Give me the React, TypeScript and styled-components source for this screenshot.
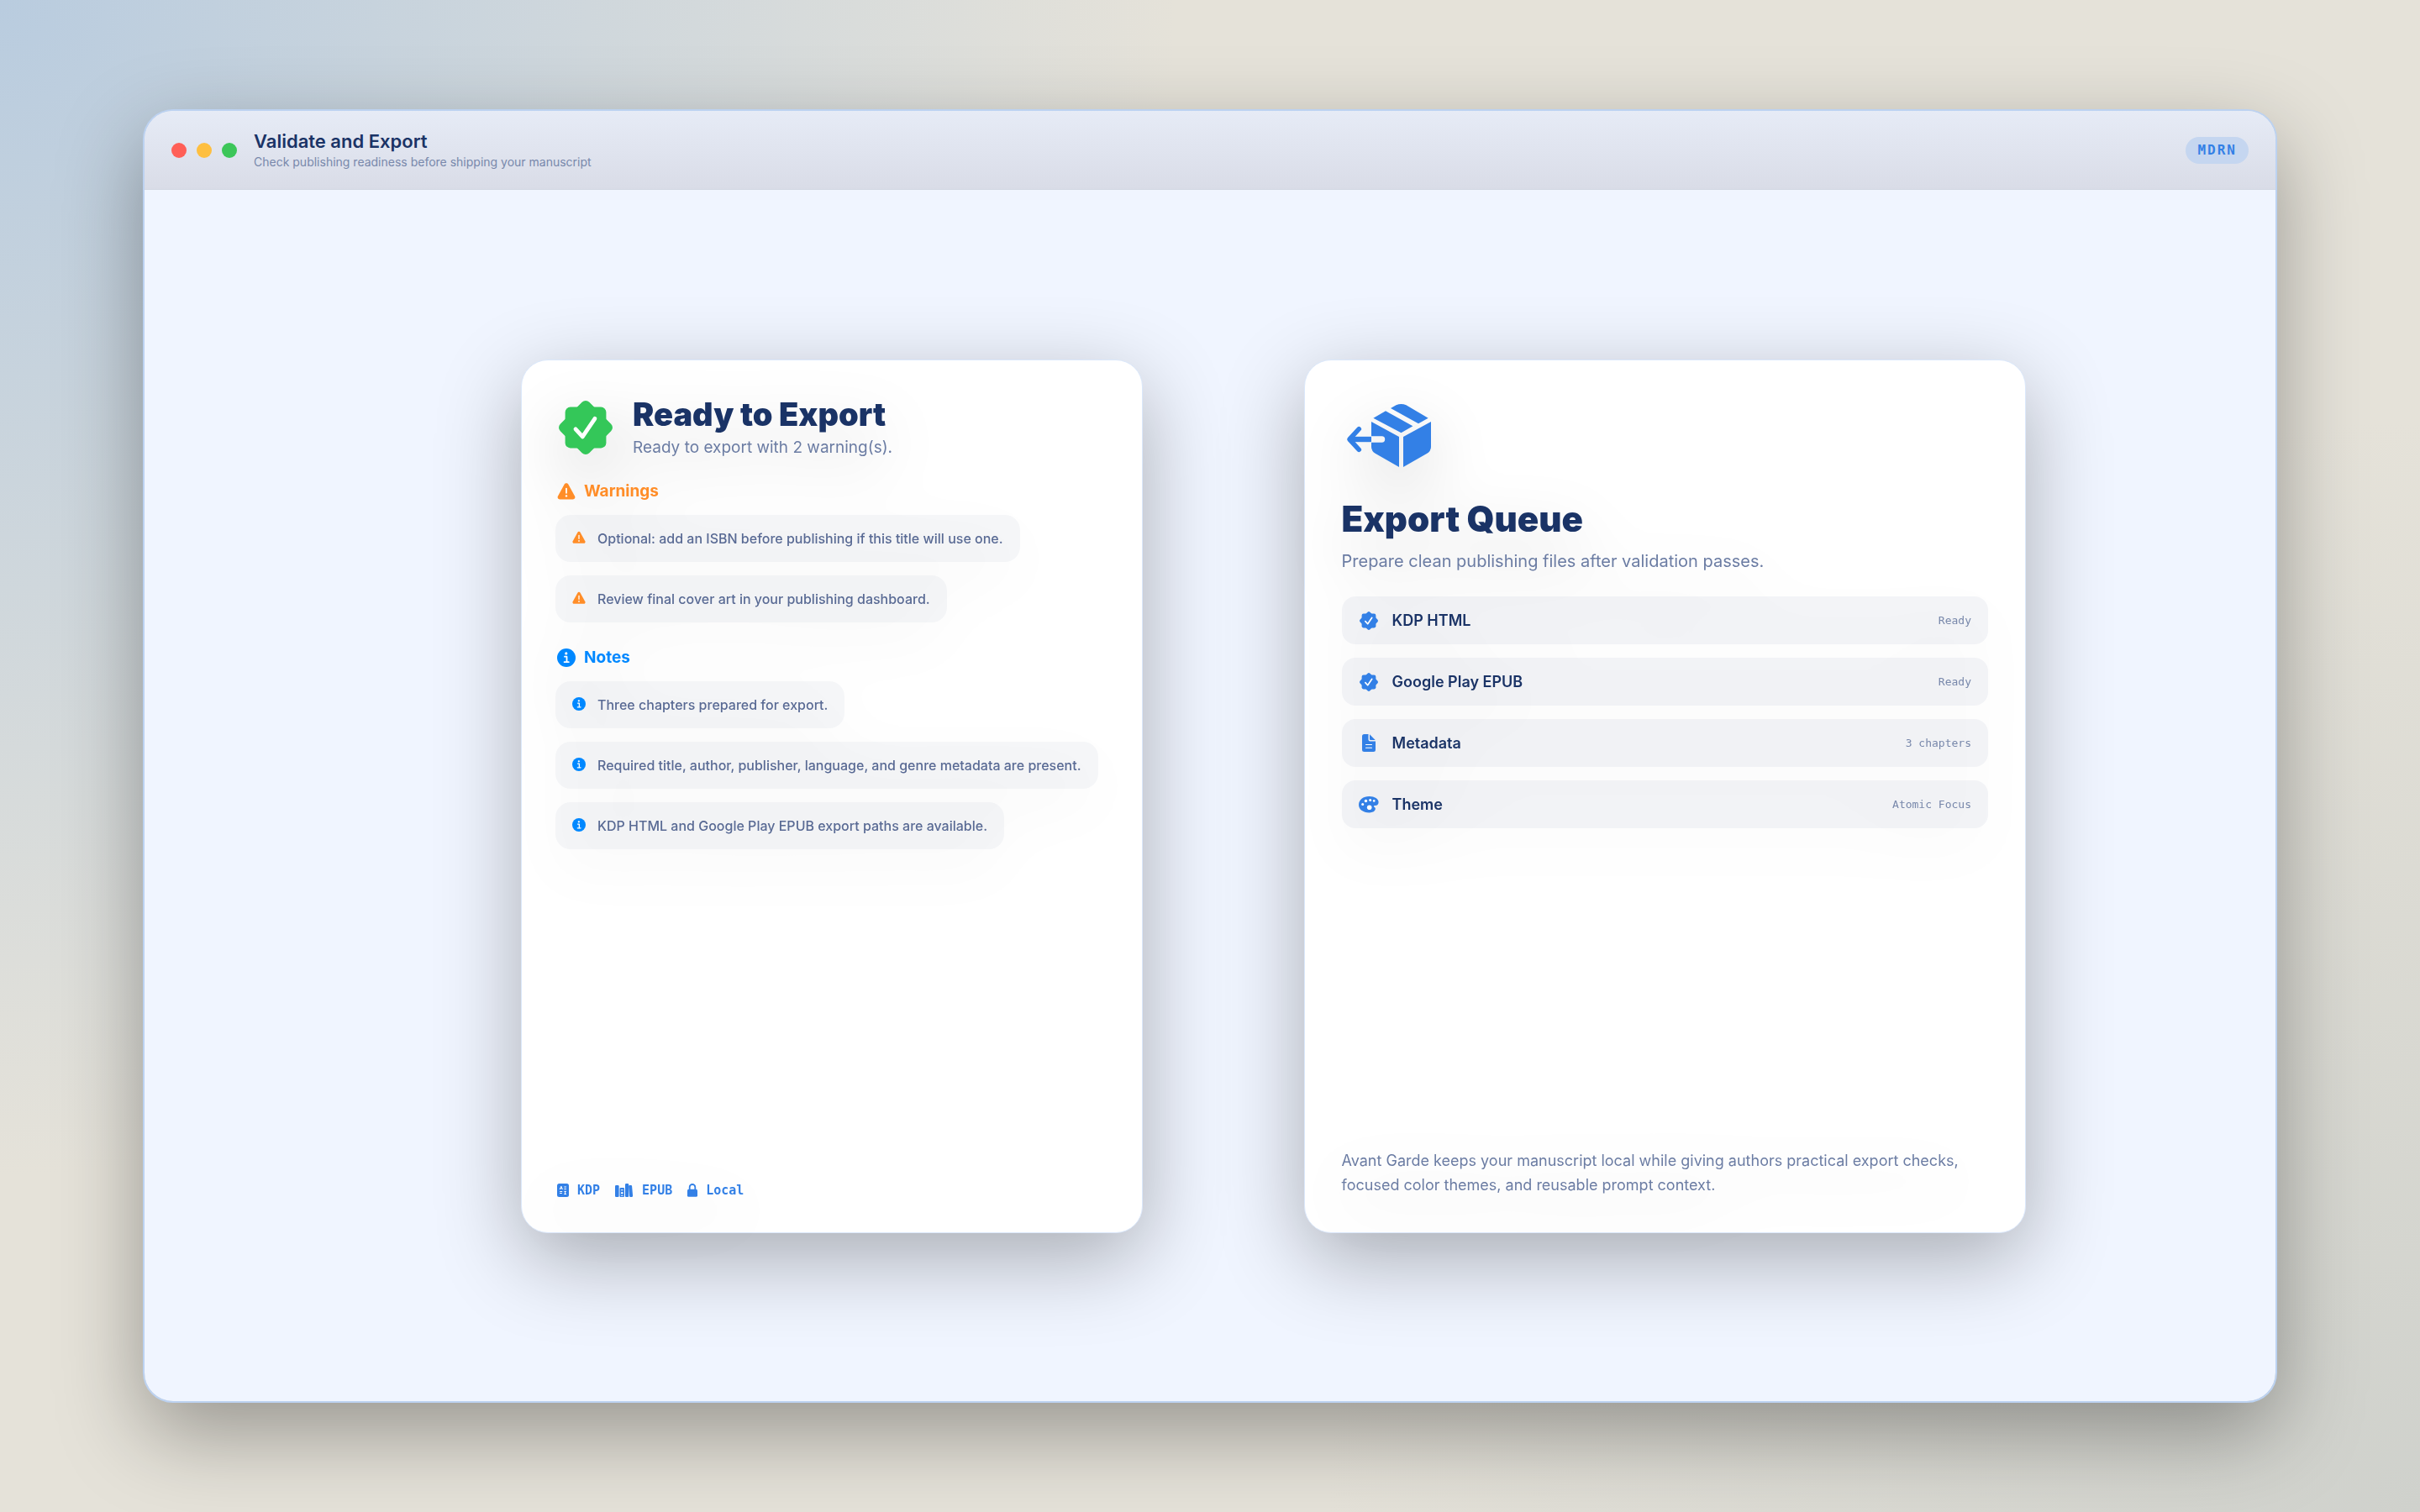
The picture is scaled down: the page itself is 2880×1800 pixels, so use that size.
import React from "react";
import styled, { createGlobalStyle, ThemeProvider } from "styled-components";

const theme = {
  navy: "#1a3366",
  blue: "#3380e6",
  green: "#34c759",
  orange: "#ff8d28",
  info: "#0088ff",
  body: "#596a94",
  muted: "#6b7ca3",
  faint: "#7888ab",
  sans: '"Inter", "Liberation Sans", sans-serif',
  mono: '"DejaVu Sans Mono", "Liberation Mono", monospace',
};

const GlobalStyle = createGlobalStyle`
  *, *::before, *::after { box-sizing: border-box; }
  body { margin: 0; }
  h1, h2, h3, p, ul { margin: 0; padding: 0; }
  ul { list-style: none; }
  svg { display: block; flex: none; overflow: visible; }
`;

const Desktop = styled.div`
  display: flex;
  min-height: 100vh;
  padding: 130px 170px;
  font-family: ${theme.sans};
  color: ${theme.navy};
  background:
    radial-gradient(circle at 0 0, #b9ccdf 0, rgba(185, 204, 223, 0) 1400px),
    radial-gradient(circle at 100% 100%, #cfd1cc 0, rgba(207, 209, 204, 0) 1300px),
    #e5e2d9;
`;

const Window = styled.main`
  flex: 1;
  display: flex;
  flex-direction: column;
  border: 2px solid #bcd2f1;
  border-radius: 36px;
  background: #f0f5ff;
  background-clip: padding-box;
  box-shadow: 0 36px 100px rgba(0, 0, 0, 0.34);
  overflow: hidden;
`;

const TitleBar = styled.header`
  display: flex;
  align-items: center;
  gap: 20px;
  height: 94px;
  padding: 0 32px;
  background: linear-gradient(#e6ebf6, #e0e4ef 50%, #d9dce7);
  border-bottom: 1px solid #d2d7e2;
`;

const Lights = styled.div`
  display: flex;
  gap: 12px;
`;

const Light = styled.button<{ $color: string }>`
  width: 18px;
  height: 18px;
  padding: 0;
  border: 0;
  border-radius: 50%;
  background: ${(p) => p.$color};
`;

const TitleText = styled.div`
  flex: 1;
`;

const WindowTitle = styled.h1`
  font-size: 22px;
  line-height: 28px;
  font-weight: 600;
`;

const WindowSubtitle = styled.p`
  font-size: 14px;
  line-height: 22px;
  color: ${theme.faint};
`;

const ModeBadge = styled.span`
  padding: 0 14px;
  border-radius: 16px;
  font: 700 16px/32px ${theme.mono};
  letter-spacing: 2px;
  color: ${theme.blue};
  background: #c5d6f0;
`;

const Stage = styled.div`
  flex: 1;
  display: grid;
  grid-template-columns: 740fr 860fr;
  gap: 192px;
  padding: 202px 297px 200px 448px;
`;

const Card = styled.section<{ $pad: string }>`
  padding: ${(p) => p.$pad};
  border: 1px solid #dbe8fb;
  border-radius: 32px;
  background: #fff;
  box-shadow: 0 30px 100px rgba(0, 0, 0, 0.3);
`;

const CardBody = styled.div`
  display: flex;
  flex-direction: column;
  height: 100%;
  filter: drop-shadow(0 24px 36px rgba(0, 0, 0, 0.16));
`;

const Push = styled.div`
  margin-top: auto;
`;

const StatusHead = styled.div`
  display: flex;
  align-items: center;
  gap: 24px;
  padding-left: 4px;
  margin-bottom: 22px;
`;

const StatusTitle = styled.h2`
  font-size: 38px;
  line-height: 48px;
  font-weight: 900;
`;

const StatusText = styled.p`
  font-size: 19px;
  line-height: 32px;
  color: ${theme.muted};
`;

const Group = styled.section`
  margin-bottom: 28px;
`;

const GroupTitle = styled.h3<{ $color: string }>`
  display: flex;
  align-items: center;
  gap: 10px;
  padding-left: 2px;
  margin-bottom: 14px;
  font-size: 19px;
  line-height: 28px;
  font-weight: 700;
  color: ${(p) => p.$color};
`;

const Notices = styled.ul`
  display: flex;
  flex-direction: column;
  align-items: flex-start;
  gap: 16px;
`;

const Notice = styled.li<{ $color: string }>`
  display: flex;
  align-items: center;
  gap: 14px;
  height: 56px;
  padding: 0 20px;
  border-radius: 18px;
  background: rgba(110, 125, 155, 0.07);
  font-size: 16px;
  font-weight: 500;
  line-height: 24px;
  color: ${theme.body};
  white-space: nowrap;
  svg { color: ${(p) => p.$color}; margin-bottom: 2px; }
`;

const Formats = styled.ul`
  display: flex;
  gap: 18px;
  padding-left: 2px;
`;

const Format = styled.li`
  display: flex;
  align-items: center;
  gap: 10px;
  font: 700 15px/20px ${theme.mono};
  color: ${theme.blue};
`;

const QueueIcon = styled.div`
  padding-left: 6px;
`;

const QueueTitle = styled.h2`
  margin-top: 36px;
  font-size: 42px;
  line-height: 52px;
  font-weight: 900;
`;

const QueueText = styled.p`
  margin-bottom: 18px;
  font-size: 20px;
  line-height: 48px;
  color: ${theme.muted};
`;

const QueueList = styled.ul`
  display: flex;
  flex-direction: column;
  gap: 16px;
`;

const QueueRow = styled.li`
  display: flex;
  align-items: center;
  gap: 16px;
  height: 57px;
  padding: 0 20px;
  border-radius: 16px;
  background: rgba(100, 110, 150, 0.08);
`;

const IconSlot = styled.span`
  display: flex;
  justify-content: center;
  width: 24px;
  color: ${theme.blue};
`;

const RowName = styled.span`
  flex: 1;
  font-size: 18px;
  line-height: 24px;
  font-weight: 600;
`;

const RowState = styled.span`
  font: 400 13px/20px ${theme.mono};
  color: ${theme.faint};
`;

const Footnote = styled.p`
  font-size: 18px;
  line-height: 29px;
  color: ${theme.muted};
`;

const Seal = ({ size, color = "currentColor" }: { size: number; color?: string }) => (
  <svg width={size} height={size} viewBox="0 0 24 24" aria-hidden="true">
    <g fill={color}>
      <rect x="2.85" y="2.85" width="18.3" height="18.3" rx="2.3" />
      <rect x="2.85" y="2.85" width="18.3" height="18.3" rx="2.3" transform="rotate(45 12 12)" />
    </g>
    <path d="M7.500 12.700 10.600 16.100 16.100 8" fill="none" stroke="#fff" strokeWidth="1.800" strokeLinecap="round" strokeLinejoin="round" />
  </svg>
);

const Warning = ({ size }: { size: number }) => (
  <svg width={size} height={size} viewBox="0 0 22 22" aria-hidden="true">
    <path d="M11 1.2c1 0 1.8.5 2.3 1.4l7.800 14.100c.9 1.700-.2 3.700-2.200 3.700H3.100c-2 0-3.100-2-2.200-3.700L8.700 2.600C9.200 1.700 10 1.200 11 1.200Z" fill="currentColor" />
    <path d="M11 7.600v5.200" stroke="#fff" strokeWidth="1.800" strokeLinecap="round" />
    <circle cx="11" cy="16.400" r="1.200" fill="#fff" />
  </svg>
);

const Info = ({ size }: { size: number }) => (
  <svg width={size} height={size} viewBox="0 0 22 22" aria-hidden="true">
    <circle cx="11" cy="11" r="11" fill="currentColor" />
    <circle cx="10.800" cy="5.900" r="1.600" fill="#fff" />
    <path d="M9 9.700h2.500v6.300M8.600 16.200h5.200" fill="none" stroke="#fff" strokeWidth="1.800" strokeLinecap="round" strokeLinejoin="round" />
  </svg>
);

const ShippingBox = () => (
  <svg width="100" height="75" viewBox="0 0 100 75" fill="#3380e6" aria-hidden="true">
    <path d="M46 8.300 78.400 26.300 64.500 34.300 31.400 16.700Z" />
    <path d="M52 5 58.500 1.300Q64.500-1.300 70.500 1.300L96.700 16.700 85 23.300Z" />
    <path d="M67 39 100 21V51Q100 56 95 59L67 75Z" />
    <path fillRule="evenodd" d="M29 21 62 39V75L34 59Q29 56 29 51ZM29 38.300H41.500A3.700 3.700 0 0 1 41.500 45.700H29Z" />
    <path d="M6 38.800H29V45.200H6Z" />
    <path d="M14.300 29.700 3 42 14.300 54.300" fill="none" stroke="#3380e6" strokeWidth="5.600" strokeLinecap="round" strokeLinejoin="round" />
  </svg>
);

const Doc = () => (
  <svg width="16" height="21" viewBox="0 0 16 21" aria-hidden="true">
    <path d="M2.500 0H7.500V6.500Q7.500 8.500 9.500 8.500H16V18.500Q16 21 13.500 21H2.500Q0 21 0 18.500V2.500Q0 0 2.500 0ZM9 .3 15.700 7H10Q9 7 9 6Z" fill="currentColor" />
    <path d="M4.500 12.500H11.500M4.500 16.200H11.500" stroke="#fff" strokeWidth="1.100" strokeLinecap="round" />
  </svg>
);

const Palette = () => (
  <svg width="24" height="20" viewBox="0 0 24 20" aria-hidden="true">
    <path d="M12.500 0C19 0 23.600 3 23.600 7 23.600 10 21.500 11.300 19.300 11 17.600 10.900 17.600 12.400 18.800 13 20.200 13.800 20.200 15.500 19 17 17.500 18.800 15 19.400 12.500 19.400 5 19.400 0 15.500 0 10 0 4 5.500 0 12.500 0Z" fill="currentColor" />
    <g fill="#fff">
      <circle cx="4.700" cy="9.400" r="1.500" />
      <circle cx="8.500" cy="5.500" r="1.700" />
      <circle cx="13.700" cy="4.400" r="1.500" />
      <circle cx="18.200" cy="5.400" r="1.300" />
      <circle cx="12.700" cy="13.200" r="2.800" />
    </g>
  </svg>
);

const CharacterBook = () => (
  <svg width="14" height="16" viewBox="0 0 14 16" aria-hidden="true">
    <rect width="14" height="16" rx="2.500" fill="currentColor" />
    <path d="M3.200 7 4.900 3.200 6.400 7M3.800 5.800H6M8.300 4H11M8.300 6.400H11M3.200 9.500H6.200M3.200 11.500H5.800M8.300 9.300H11M9.600 9.300V12.500M8.300 12.500H11" fill="none" stroke="#fff" strokeWidth="1" />
  </svg>
);

const Books = () => (
  <svg width="22" height="16" viewBox="0 0 22 16" fill="currentColor" aria-hidden="true">
    <rect y="2" width="4.600" height="14" rx="1.200" />
    <path fillRule="evenodd" d="M6.500 5h3.500q1 0 1 1v9q0 1-1 1H6.500q-1 0-1-1V6q0-1 1-1ZM7 7.300v1h2.600v-1ZM8.300 10a1.300 1.300 0 1 0 0 2.600 1.300 1.300 0 0 0 0-2.600ZM7 14v.8h2.600V14Z" />
    <rect x="12" width="4.200" height="16" rx="1.200" />
    <rect x="16.600" y="2" width="4" height="14" rx="1.200" transform="rotate(-5 18.600 9)" />
  </svg>
);

const Lock = () => (
  <svg width="12" height="16" viewBox="0 0 12 16" aria-hidden="true">
    <rect y="6.800" width="12" height="9" rx="1.600" fill="currentColor" />
    <path d="M2.700 7.500V4.300a3.300 3.300 0 0 1 6.600 0V7.500" fill="none" stroke="currentColor" strokeWidth="1.800" />
  </svg>
);

const warnings = [
  "Optional: add an ISBN before publishing if this title will use one.",
  "Review final cover art in your publishing dashboard.",
];

const notes = [
  "Three chapters prepared for export.",
  "Required title, author, publisher, language, and genre metadata are present.",
  "KDP HTML and Google Play EPUB export paths are available.",
];

const queue = [
  { name: "KDP HTML", state: "Ready", icon: <Seal size={22} /> },
  { name: "Google Play EPUB", state: "Ready", icon: <Seal size={22} /> },
  { name: "Metadata", state: "3 chapters", icon: <Doc /> },
  { name: "Theme", state: "Atomic Focus", icon: <Palette /> },
];

export default function App() {
  return (
    <ThemeProvider theme={theme}>
      <GlobalStyle />
      <Desktop>
        <Window>
          <TitleBar>
            <Lights>
              <Light type="button" aria-label="Close" $color="#ff5f57" />
              <Light type="button" aria-label="Minimize" $color="#febf40" />
              <Light type="button" aria-label="Zoom" $color="#3cc659" />
            </Lights>
            <TitleText>
              <WindowTitle>Validate and Export</WindowTitle>
              <WindowSubtitle>Check publishing readiness before shipping your manuscript</WindowSubtitle>
            </TitleText>
            <ModeBadge>MDRN</ModeBadge>
          </TitleBar>
          <Stage>
            <Card $pad="40px">
              <CardBody>
                <StatusHead>
                  <Seal size={64} color={theme.green} />
                  <div>
                    <StatusTitle>Ready to Export</StatusTitle>
                    <StatusText>Ready to export with 2 warning(s).</StatusText>
                  </div>
                </StatusHead>
                <Group>
                  <GroupTitle $color={theme.orange}><Warning size={22} />Warnings</GroupTitle>
                  <Notices>
                    {warnings.map((text) => (
                      <Notice key={text} $color={theme.orange}><Warning size={16} />{text}</Notice>
                    ))}
                  </Notices>
                </Group>
                <Group>
                  <GroupTitle $color={theme.info}><Info size={22} />Notes</GroupTitle>
                  <Notices>
                    {notes.map((text) => (
                      <Notice key={text} $color={theme.info}><Info size={16} />{text}</Notice>
                    ))}
                  </Notices>
                </Group>
                <Push>
                  <Formats>
                    <Format><CharacterBook />KDP</Format>
                    <Format><Books />EPUB</Format>
                    <Format><Lock />Local</Format>
                  </Formats>
                </Push>
              </CardBody>
            </Card>
            <Card $pad="52px 44px 42px">
              <CardBody>
                <QueueIcon><ShippingBox /></QueueIcon>
                <QueueTitle>Export Queue</QueueTitle>
                <QueueText>Prepare clean publishing files after validation passes.</QueueText>
                <QueueList>
                  {queue.map((item) => (
                    <QueueRow key={item.name}>
                      <IconSlot>{item.icon}</IconSlot>
                      <RowName>{item.name}</RowName>
                      <RowState>{item.state}</RowState>
                    </QueueRow>
                  ))}
                </QueueList>
                <Push>
                  <Footnote>
                    Avant Garde keeps your manuscript local while giving authors practical export checks, focused color themes, and reusable prompt context.
                  </Footnote>
                </Push>
              </CardBody>
            </Card>
          </Stage>
        </Window>
      </Desktop>
    </ThemeProvider>
  );
}
